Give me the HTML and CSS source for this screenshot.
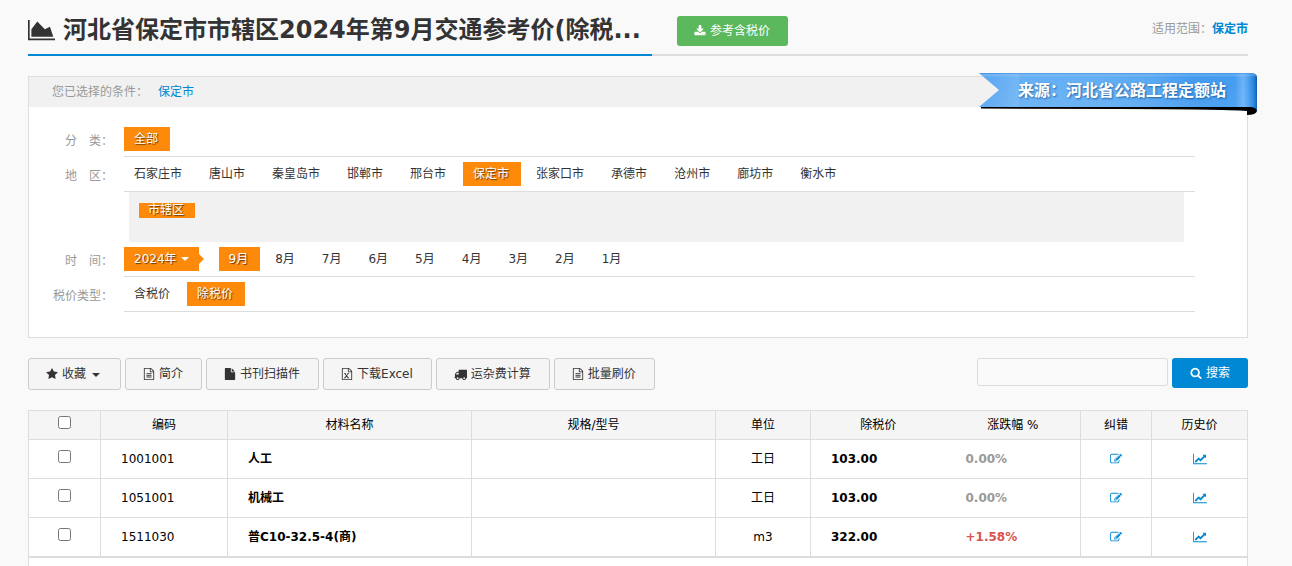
FILE: index.html
```html
<!DOCTYPE html>
<html lang="zh-CN">
<head>
<meta charset="utf-8">
<title>河北省保定市市辖区2024年第9月交通参考价</title>
<link rel="stylesheet" href="styles.css">
</head>
<body>
<svg class="sprite" aria-hidden="true">
  <symbol id="i-area" viewBox="128 0 2048 1792"><path d="M2176 1536v128h-2048v-1536h128v1408h1920zM1792 640l256 768h-1664v-576l448-576 576 576z"/></symbol>
  <symbol id="i-line" viewBox="128 0 2048 1792"><path d="M2176 1536v128h-2048v-1536h128v1408h1920zm-128-1248v435q0 21-19.500 29.500t-35.500-7.500l-121-121-633 633q-10 10-23 10t-23-10l-233-233-416 416-192-192 585-585q10-10 23-10t23 10l233 233 464-464-121-121q-16-16-7.500-35.500t29.500-19.500h435q14 0 23 9t9 23z"/></symbol>
  <symbol id="i-download" viewBox="0 0 1792 1792"><path d="M1344 1344q0-26-19-45t-45-19-45 19-19 45 19 45 45 19 45-19 19-45zm256 0q0-26-19-45t-45-19-45 19-19 45 19 45 45 19 45-19 19-45zm128-224v320q0 40-28 68t-68 28h-1472q-40 0-68-28t-28-68v-320q0-40 28-68t68-28h465l135 136q58 56 136 56t136-56l136-136h464q40 0 68 28t28 68zm-325-569q17 41-14 70l-448 448q-18 19-45 19t-45-19l-448-448q-31-29-14-70 17-39 59-39h256v-448q0-26 19-45t45-19h256q26 0 45 19t19 45v448h256q42 0 59 39z"/></symbol>
  <symbol id="i-star" viewBox="0 0 1792 1792"><path d="M1728 647q0 22-26 48l-363 354 86 500q1 7 1 20 0 21-10.500 35.500t-30.500 14.500q-19 0-40-12l-449-236-449 236q-22 12-40 12-21 0-31.500-14.500t-10.500-35.500q0-6 2-20l86-500-364-354q-25-27-25-48 0-37 56-46l502-73 225-455q19-41 49-41t49 41l225 455 502 73q56 9 56 46z"/></symbol>
  <symbol id="i-text" viewBox="0 0 1792 1792"><path d="M1596 380q28 28 48 76t20 88v1152q0 40-28 68t-68 28h-1344q-40 0-68-28t-28-68v-1600q0-40 28-68t68-28h896q40 0 88 20t76 48zm-444-244v376h376q-10-29-22-41l-313-313q-12-12-41-22zm384 1528v-1024h-416q-40 0-68-28t-28-68v-416h-768v1536h1280zm-1024-864q0-14 9-23t23-9h704q14 0 23 9t9 23v64q0 14-9 23t-23 9h-704q-14 0-23-9t-9-23v-64zm736 224q14 0 23 9t9 23v64q0 14-9 23t-23 9h-704q-14 0-23-9t-9-23v-64q0-14 9-23t23-9h704zm0 256q14 0 23 9t9 23v64q0 14-9 23t-23 9h-704q-14 0-23-9t-9-23v-64q0-14 9-23t23-9h704z"/></symbol>
  <symbol id="i-excel" viewBox="0 0 1792 1792"><path d="M1596 380q28 28 48 76t20 88v1152q0 40-28 68t-68 28h-1344q-40 0-68-28t-28-68v-1600q0-40 28-68t68-28h896q40 0 88 20t76 48zm-444-244v376h376q-10-29-22-41l-313-313q-12-12-41-22zm384 1528v-1024h-416q-40 0-68-28t-28-68v-416h-768v1536h1280zM440 1430h290v110h-290zM920 1430h300v110h-300zM450 768h290v110h-290zM930 768h280v110h-280zM500 850h155l505 620h-160zM1000 850h140l-500 620h-140z"/></symbol>
  <symbol id="i-file" viewBox="0 0 1792 1792"><path d="M1152 512v-472q22 14 36 28l408 408q14 14 28 36h-472zm-128 32q0 40 28 68t68 28h544v1056q0 40-28 68t-68 28h-1344q-40 0-68-28t-28-68v-1600q0-40 28-68t68-28h800v544z"/></symbol>
  <symbol id="i-truck" viewBox="0 0 1792 1792"><path d="M640 1408q0-52-38-90t-90-38-90 38-38 90 38 90 90 38 90-38 38-90zm-384-512h384v-256h-158q-13 0-22 9l-195 195q-9 9-9 22v30zm1280 512q0-52-38-90t-90-38-90 38-38 90 38 90 90 38 90-38 38-90zm256-1088v1024q0 15-4 26.500t-13.500 18.500-16.500 11.500-23.500 6-22.500 2-25.500 0-22.500-.5q0 106-75 181t-181 75-181-75-75-181h-384q0 106-75 181t-181 75-181-75-75-181h-64q-3 0-22.500.5t-25.500 0-22.500-2-23.500-6-16.500-11.500-13.500-18.500-4-26.500q0-26 19-45t45-19v-320q0-8-.5-35t0-38 2.500-34.500 6.500-37 14-30.500 22.500-30l198-198q19-19 50.500-32t58.500-13h160v-192q0-26 19-45t45-19h1024q26 0 45 19t19 45z"/></symbol>
  <symbol id="i-search" viewBox="0 0 1792 1792"><path d="M1216 832q0-185-131.500-316.500t-316.500-131.500-316.500 131.500-131.500 316.500 131.500 316.500 316.500 131.500 316.500-131.500 131.500-316.500zm512 832q0 52-38 90t-90 38q-54 0-90-38l-343-342q-179 124-399 124-143 0-273.500-55.500t-225-150-150-225-55.500-273.500 55.500-273.500 150-225 225-150 273.500-55.500 273.500 55.500 225 150 150 225 55.500 273.500q0 220-124 399l343 343q37 37 37 90z"/></symbol>
  <symbol id="i-edit" viewBox="0 0 1792 1792"><path d="M888 1184l116-116-152-152-116 116v56h96v96h56zm440-720q-16-16-33 1l-350 350q-17 17-1 33t33-1l350-350q17-17 1-33zm80 594v190q0 119-84.500 203.500t-203.500 84.500h-832q-119 0-203.500-84.500t-84.500-203.500v-832q0-119 84.500-203.500t203.500-84.500h832q63 0 117 25 15 7 18 23 3 17-9 29l-49 49q-14 14-32 8-23-6-45-6h-832q-66 0-113 47t-47 113v832q0 66 47 113t113 47h832q66 0 113-47t47-113v-126q0-13 9-22l64-64q15-15 35-7t20 29zm-96-738l288 288-672 672h-288v-288zm444 132l-92 92-288-288 92-92q28-28 68-28t68 28l152 152q28 28 28 68t-28 68z"/></symbol>
</svg>

<main class="page">
  <header class="head">
    <h1 class="title"><svg class="title-icon"><use href="#i-area"/></svg>河北省保定市市辖区2024年第9月交通参考价(除税...</h1>
    <button type="button" class="btn-green"><svg class="icon"><use href="#i-download"/></svg>参考含税价</button>
    <p class="scope">适用范围：<a href="#">保定市</a></p>
  </header>

  <section class="panel">
    <div class="panel-head">您已选择的条件：<a href="#">保定市</a></div>
    <div class="ribbon">
      <svg class="ribbon-art" viewBox="0 0 280 43" aria-hidden="true">
        <defs>
          <linearGradient id="rb" x1="0" x2="1" y1="0" y2="0">
            <stop offset="0" stop-color="#4a9df0"/><stop offset=".14" stop-color="#66b0f5"/><stop offset=".4" stop-color="#64aff4"/><stop offset=".6" stop-color="#5ba9f2"/><stop offset=".78" stop-color="#439bef"/><stop offset=".92" stop-color="#449df1"/><stop offset=".95" stop-color="#6cb3f7"/><stop offset=".97" stop-color="#4a9ff0"/><stop offset=".99" stop-color="#1f7fda"/><stop offset="1" stop-color="#0c58a8"/>
          </linearGradient>
          <linearGradient id="rs" x1="0" x2="0" y1="0" y2="1">
            <stop offset="0" stop-color="#3088de" stop-opacity=".7"/><stop offset=".1" stop-color="#fff" stop-opacity="0"/><stop offset="1" stop-color="#fff" stop-opacity=".06"/>
          </linearGradient>
        </defs>
        <path d="M2 34H268Q277 33 278 36V38Q277 42 268 42V38Q240 36 140 36L2 35.500Z" fill="#000"/>
        <path d="M0 0H271Q278 0 278 4V38Q277 34 271 34H0L20 17Z" fill="url(#rb)"/>
        <path d="M0 0H271Q278 0 278 4V38Q277 34 271 34H0L20 17Z" fill="url(#rs)"/>
        <path d="M40 1V34H0L20 17L1 1Z" fill="#fff" fill-opacity=".08"/>
      </svg>
      <span class="ribbon-text">来源：河北省公路工程定额站</span>
    </div>
    <div class="filters">
      <div class="filter">
        <span class="label">分　类：</span>
        <div class="options"><a href="#" class="tag on">全部</a></div>
      </div>
      <div class="filter">
        <span class="label">地　区：</span>
        <div class="options">
          <a href="#" class="tag">石家庄市</a><a href="#" class="tag">唐山市</a><a href="#" class="tag">秦皇岛市</a><a href="#" class="tag">邯郸市</a><a href="#" class="tag">邢台市</a><a href="#" class="tag on">保定市</a><a href="#" class="tag">张家口市</a><a href="#" class="tag">承德市</a><a href="#" class="tag">沧州市</a><a href="#" class="tag">廊坊市</a><a href="#" class="tag">衡水市</a>
        </div>
      </div>
      <div class="sub"><a href="#" class="sub-tag">市辖区</a></div>
      <div class="filter">
        <span class="label">时　间：</span>
        <div class="options">
          <button type="button" class="tag on year">2024年<i class="caret"></i></button><a href="#" class="tag on">9月</a><a href="#" class="tag">8月</a><a href="#" class="tag">7月</a><a href="#" class="tag">6月</a><a href="#" class="tag">5月</a><a href="#" class="tag">4月</a><a href="#" class="tag">3月</a><a href="#" class="tag">2月</a><a href="#" class="tag">1月</a>
        </div>
      </div>
      <div class="filter">
        <span class="label">税价类型：</span>
        <div class="options"><a href="#" class="tag">含税价</a><a href="#" class="tag on">除税价</a></div>
      </div>
    </div>
  </section>

  <div class="toolbar">
    <button type="button" class="btn"><svg class="icon"><use href="#i-star"/></svg>收藏<i class="caret"></i></button>
    <button type="button" class="btn"><svg class="icon"><use href="#i-text"/></svg>简介</button>
    <button type="button" class="btn"><svg class="icon"><use href="#i-file"/></svg>书刊扫描件</button>
    <button type="button" class="btn"><svg class="icon"><use href="#i-excel"/></svg>下载Excel</button>
    <button type="button" class="btn"><svg class="icon truck"><use href="#i-truck"/></svg>运杂费计算</button>
    <button type="button" class="btn"><svg class="icon"><use href="#i-text"/></svg>批量刷价</button>
    <form class="search">
      <input type="text" class="search-box" aria-label="搜索">
      <button type="button" class="btn-blue"><svg class="icon"><use href="#i-search"/></svg>搜索</button>
    </form>
  </div>

  <table class="grid">
    <colgroup><col class="c-check"><col class="c-code"><col><col><col class="c-unit"><col class="c-price"><col class="c-price"><col class="c-fix"><col class="c-hist"></colgroup>
    <thead>
      <tr><th><input type="checkbox" aria-label="全选"></th><th>编码</th><th>材料名称</th><th>规格/型号</th><th>单位</th><th class="open">除税价</th><th>涨跌幅 %</th><th>纠错</th><th>历史价</th></tr>
    </thead>
    <tbody>
      <tr><td class="mid"><input type="checkbox" aria-label="1001001"></td><td>1001001</td><td class="strong">人工</td><td></td><td class="mid">工日</td><td class="strong open">103.00</td><td class="flat">0.00%</td><td class="mid"><a href="#" aria-label="纠错"><svg class="icon"><use href="#i-edit"/></svg></a></td><td class="mid"><a href="#" aria-label="历史价"><svg class="icon wide"><use href="#i-line"/></svg></a></td></tr>
      <tr><td class="mid"><input type="checkbox" aria-label="1051001"></td><td>1051001</td><td class="strong">机械工</td><td></td><td class="mid">工日</td><td class="strong open">103.00</td><td class="flat">0.00%</td><td class="mid"><a href="#" aria-label="纠错"><svg class="icon"><use href="#i-edit"/></svg></a></td><td class="mid"><a href="#" aria-label="历史价"><svg class="icon wide"><use href="#i-line"/></svg></a></td></tr>
      <tr><td class="mid"><input type="checkbox" aria-label="1511030"></td><td>1511030</td><td class="strong">普C10-32.5-4(商)</td><td></td><td class="mid">m3</td><td class="strong open">322.00</td><td class="up">+1.58%</td><td class="mid"><a href="#" aria-label="纠错"><svg class="icon"><use href="#i-edit"/></svg></a></td><td class="mid"><a href="#" aria-label="历史价"><svg class="icon wide"><use href="#i-line"/></svg></a></td></tr>
    </tbody>
  </table>
  <div class="grid-foot"></div>
</main>
</body>
</html>
```

FILE: styles.css
```css
* { box-sizing: border-box; }

body {
  margin: 0;
  background: #f9f9f9;
  color: #333;
  font: 12px/18px "DejaVu Sans", "Noto Sans CJK SC", sans-serif;
}

a { color: #0088d4; text-decoration: none; }
button, input { font: inherit; }
button { cursor: pointer; }
.sprite { position: absolute; width: 0; height: 0; }
.page { padding: 0 44px 0 28px; }

.icon {
  width: 12px;
  height: 12px;
  flex: none;
  fill: currentColor;
}
.icon.wide { width: 14px; }
.icon.truck { width: 13px; height: 13px; }

.caret {
  border: 4px solid transparent;
  border-top-color: currentColor;
  border-bottom: 0;
}

/* Page heading */
.head {
  display: flex;
  align-items: flex-start;
  height: 56px;
  border-bottom: 2px solid #ddd;
}
.title {
  display: flex;
  align-items: center;
  gap: 8px;
  width: 624px;
  height: 56px;
  margin: 0;
  padding-top: 6px;
  border-bottom: 2px solid #0088d4;
  font-size: 24px;
  line-height: 36px;
  white-space: nowrap;
}
.title-icon { width: 27px; height: 24px; flex: none; fill: #333; }
.btn-green {
  display: flex;
  align-items: center;
  gap: 4px;
  height: 30px;
  margin: 16px 0 0 25px;
  padding: 0 18px 0 17px;
  border: 0;
  border-radius: 3px;
  background: #5cb85c;
  color: #fff;
}
.scope { margin: 20px 0 0 auto; color: #999; }
.scope a { font-weight: bold; }

/* Selected conditions and filters */
.panel {
  position: relative;
  margin-top: 20px;
  padding-bottom: 25px;
  border: 1px solid #ddd;
  background: #fff;
}
.panel-head {
  display: flex;
  align-items: center;
  gap: 10px;
  height: 30px;
  padding-left: 23px;
  background: #f1f1f1;
  color: #999;
}
.ribbon { position: absolute; top: -4px; right: -12px; width: 280px; }
.ribbon-art { display: block; width: 100%; height: auto; }
.ribbon-text {
  position: absolute;
  top: 6px;
  left: 39px;
  color: #fff;
  font-size: 16px;
  font-weight: bold;
  line-height: 24px;
  text-shadow: 1px 1px 2px rgba(0, 50, 110, .6);
  white-space: nowrap;
}
.filters { padding: 15px 52px 0 0; }
.filter { display: flex; }
.label {
  width: 95px;
  padding: 10px 11px 0 0;
  flex: none;
  color: #999;
  text-align: right;
}
.options {
  display: flex;
  gap: 5px;
  flex: 1;
  height: 35px;
  padding-top: 5px;
  border-bottom: 1px solid #ddd;
}
.tag {
  height: 24px;
  padding: 0 12px 0 10px;
  color: #333;
  line-height: 24px;
}
.tag.on {
  background: #fd8a0b;
  color: #fff;
  text-shadow: 1px 1px 1px rgba(0, 0, 0, .6);
}
.year {
  display: flex;
  position: relative;
  align-items: center;
  gap: 4px;
  margin-right: 15px;
  padding: 0 10px;
  border: 0;
}
.year::after {
  position: absolute;
  left: 100%;
  border: 5px solid transparent;
  border-left-color: #fd8a0b;
  border-right: 0;
  content: "";
}
.sub {
  height: 50px;
  margin: 0 11px 0 100px;
  padding: 11px 10px;
  background: #f1f1f1;
}
.sub-tag {
  display: block;
  width: max-content;
  padding: 0 11px 0 9px;
  background: #fd8a0b;
  color: #fff;
  line-height: 15px;
  text-shadow: 1px 1px 1px rgba(0, 0, 0, .6);
}

/* Actions and search */
.toolbar {
  display: flex;
  align-items: flex-start;
  gap: 4px;
  margin-top: 20px;
}
.btn {
  display: flex;
  align-items: center;
  gap: 3px;
  height: 32px;
  padding: 0 18px 0 17px;
  border: 1px solid #ccc;
  border-radius: 3px;
  background: #f5f5f5;
  color: #333;
  gap: 4px;
}
.btn .caret { margin: 2px 2px 0; }
.search { display: flex; gap: 4px; margin: 0 0 0 auto; }
.search-box {
  width: 191px;
  height: 28px;
  padding: 0 6px;
  border: 1px solid #ddd;
  border-radius: 2px;
  background: #fafafa;
}
.btn-blue {
  display: flex;
  align-items: center;
  gap: 4px;
  height: 30px;
  padding: 0 18px;
  border: 0;
  border-radius: 3px;
  background: #0088d4;
  color: #fff;
}

/* Price table */
.grid {
  width: 100%;
  margin-top: 20px;
  border-collapse: collapse;
  table-layout: fixed;
  background: #fff;
  color: #000;
}
.grid th, .grid td {
  height: 39px;
  padding: 0 20px;
  border: 1px solid #ddd;
  text-align: left;
}
.grid th {
  height: 29px;
  padding: 0;
  background: #f5f5f5;
  font-weight: normal;
  text-align: center;
}
.grid .mid { padding: 0; text-align: center; }
.grid .open { border-right: 0; }
.grid .open + td, .grid .open + th { border-left: 0; }
.grid .strong, .grid .flat, .grid .up { font-weight: bold; }
.grid .flat { color: #999; }
.grid .up { color: #d9534f; }
.grid .icon { display: block; margin: 0 auto; }
.grid input { display: block; margin: 0 auto 5px; }
.c-check { width: 72px; }
.c-code { width: 127px; }
.c-unit { width: 95px; }
.c-price { width: 135px; }
.c-fix { width: 71px; }
.c-hist { width: 96px; }
.grid-foot {
  height: 9px;
  border: 1px solid #ddd;
  border-bottom: 0;
  background: #fff;
}
```
